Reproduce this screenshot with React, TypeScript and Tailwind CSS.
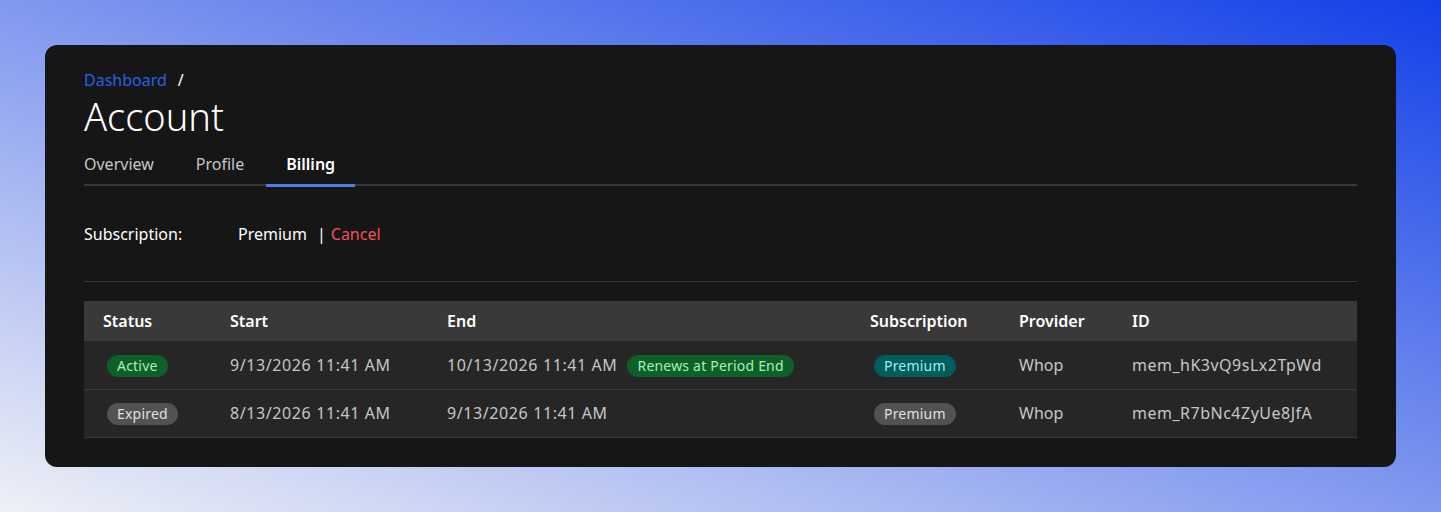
import React from "react";

const font = { fontFamily: '"Noto Sans", "Open Sans", Arial, sans-serif' };

function Badge({ kind, children }: { kind: "green" | "gray" | "teal"; children: React.ReactNode }) {
  const cls =
    kind === "green"
      ? "bg-[#0e6027] text-[#a7f0ba]"
      : kind === "teal"
      ? "bg-[#005d5d] text-[#9ef0f0]"
      : "bg-[#525252] text-[#e0e0e0]";
  return (
    <span
      className={`inline-flex h-[22px] items-center rounded-full px-[10px] text-[14px] leading-none tracking-[0.2px] ${cls}`}
    >
      {children}
    </span>
  );
}

const rows = [
  {
    status: <Badge kind="green">Active</Badge>,
    start: "9/13/2026 11:41 AM",
    end: "10/13/2026 11:41 AM",
    renew: true,
    sub: <Badge kind="teal">Premium</Badge>,
    provider: "Whop",
    id: "mem_hK3vQ9sLx2TpWd",
  },
  {
    status: <Badge kind="gray">Expired</Badge>,
    start: "8/13/2026 11:41 AM",
    end: "9/13/2026 11:41 AM",
    renew: false,
    sub: <Badge kind="gray">Premium</Badge>,
    provider: "Whop",
    id: "mem_R7bNc4ZyUe8JfA",
  },
];

export default function App() {
  return (
    <div
      style={font}
      className="min-h-[512px] w-full bg-[linear-gradient(to_top_right,#eff1f6,#1340e8)] p-[45px]"
    >
      <div className="rounded-xl bg-[#161616] px-[39px] pt-[23px] pb-[29px]">
        <div className="flex h-6 items-center text-[16px] leading-6">
          <span className="text-[#2563e6]">Dashboard</span>
          <span className="ml-[11px] text-white">/</span>
        </div>
        <h1 className="flex h-12 items-center text-[38px] leading-none font-light text-white">Account</h1>
        <div className="flex border-b-2 border-[#393939]">
          <div className="-ml-5 flex gap-[2px]">
            {["Overview", "Profile", "Billing"].map((t) => {
              const active = t === "Billing";
              return (
                <div
                  key={t}
                  className={`relative px-5 pt-3 pb-2 text-[16px] leading-6 ${
                    active ? "font-semibold text-white" : "text-[#c6c6c6]"
                  }`}
                >
                  {t}
                  {active && <span className="absolute right-0 bottom-[-3px] left-0 h-[3px] bg-[#4f7ee8]" />}
                </div>
              );
            })}
          </div>
        </div>

        <div className="mt-9 flex h-6 items-center text-[16px] leading-6">
          <span className="w-[154px] text-white">Subscription:</span>
          <span className="text-white">Premium</span>
          <span className="ml-[10px] text-white">|</span>
          <span className="ml-[5px] text-[#fa4d56]">Cancel</span>
        </div>

        <div className="mt-[35px] h-px bg-[#393939]" />

        <table className="mt-[19px] w-full table-fixed border-collapse text-left text-[16px]">
          <colgroup>
            <col className="w-[127px]" />
            <col className="w-[217px]" />
            <col className="w-[423px]" />
            <col className="w-[149px]" />
            <col className="w-[113px]" />
            <col />
          </colgroup>
          <thead>
            <tr className="h-10 bg-[#393939]">
              {["Status", "Start", "End", "Subscription", "Provider", "ID"].map((h) => (
                <th key={h} className="pl-[19px] font-semibold text-white">
                  {h}
                </th>
              ))}
            </tr>
          </thead>
          <tbody>
            {rows.map((r) => (
              <tr key={r.id} className="h-12 border-b border-[#393939] bg-[#262626] text-[#c6c6c6]">
                <td className="pl-[23px]">{r.status}</td>
                <td className="pl-[19px] tracking-[0.6px] whitespace-nowrap">{r.start}</td>
                <td className="pl-[19px]">
                  <div className="flex items-center whitespace-nowrap">
                    <span className="tracking-[0.6px]">{r.end}</span>
                    {r.renew && (
                      <span className="ml-[10px]">
                        <Badge kind="green">Renews at Period End</Badge>
                      </span>
                    )}
                  </div>
                </td>
                <td className="pl-[23px]">{r.sub}</td>
                <td className="pl-[19px]">{r.provider}</td>
                <td className="pl-[19px] tracking-[0.5px] whitespace-nowrap">{r.id}</td>
              </tr>
            ))}
          </tbody>
        </table>
      </div>
    </div>
  );
}
